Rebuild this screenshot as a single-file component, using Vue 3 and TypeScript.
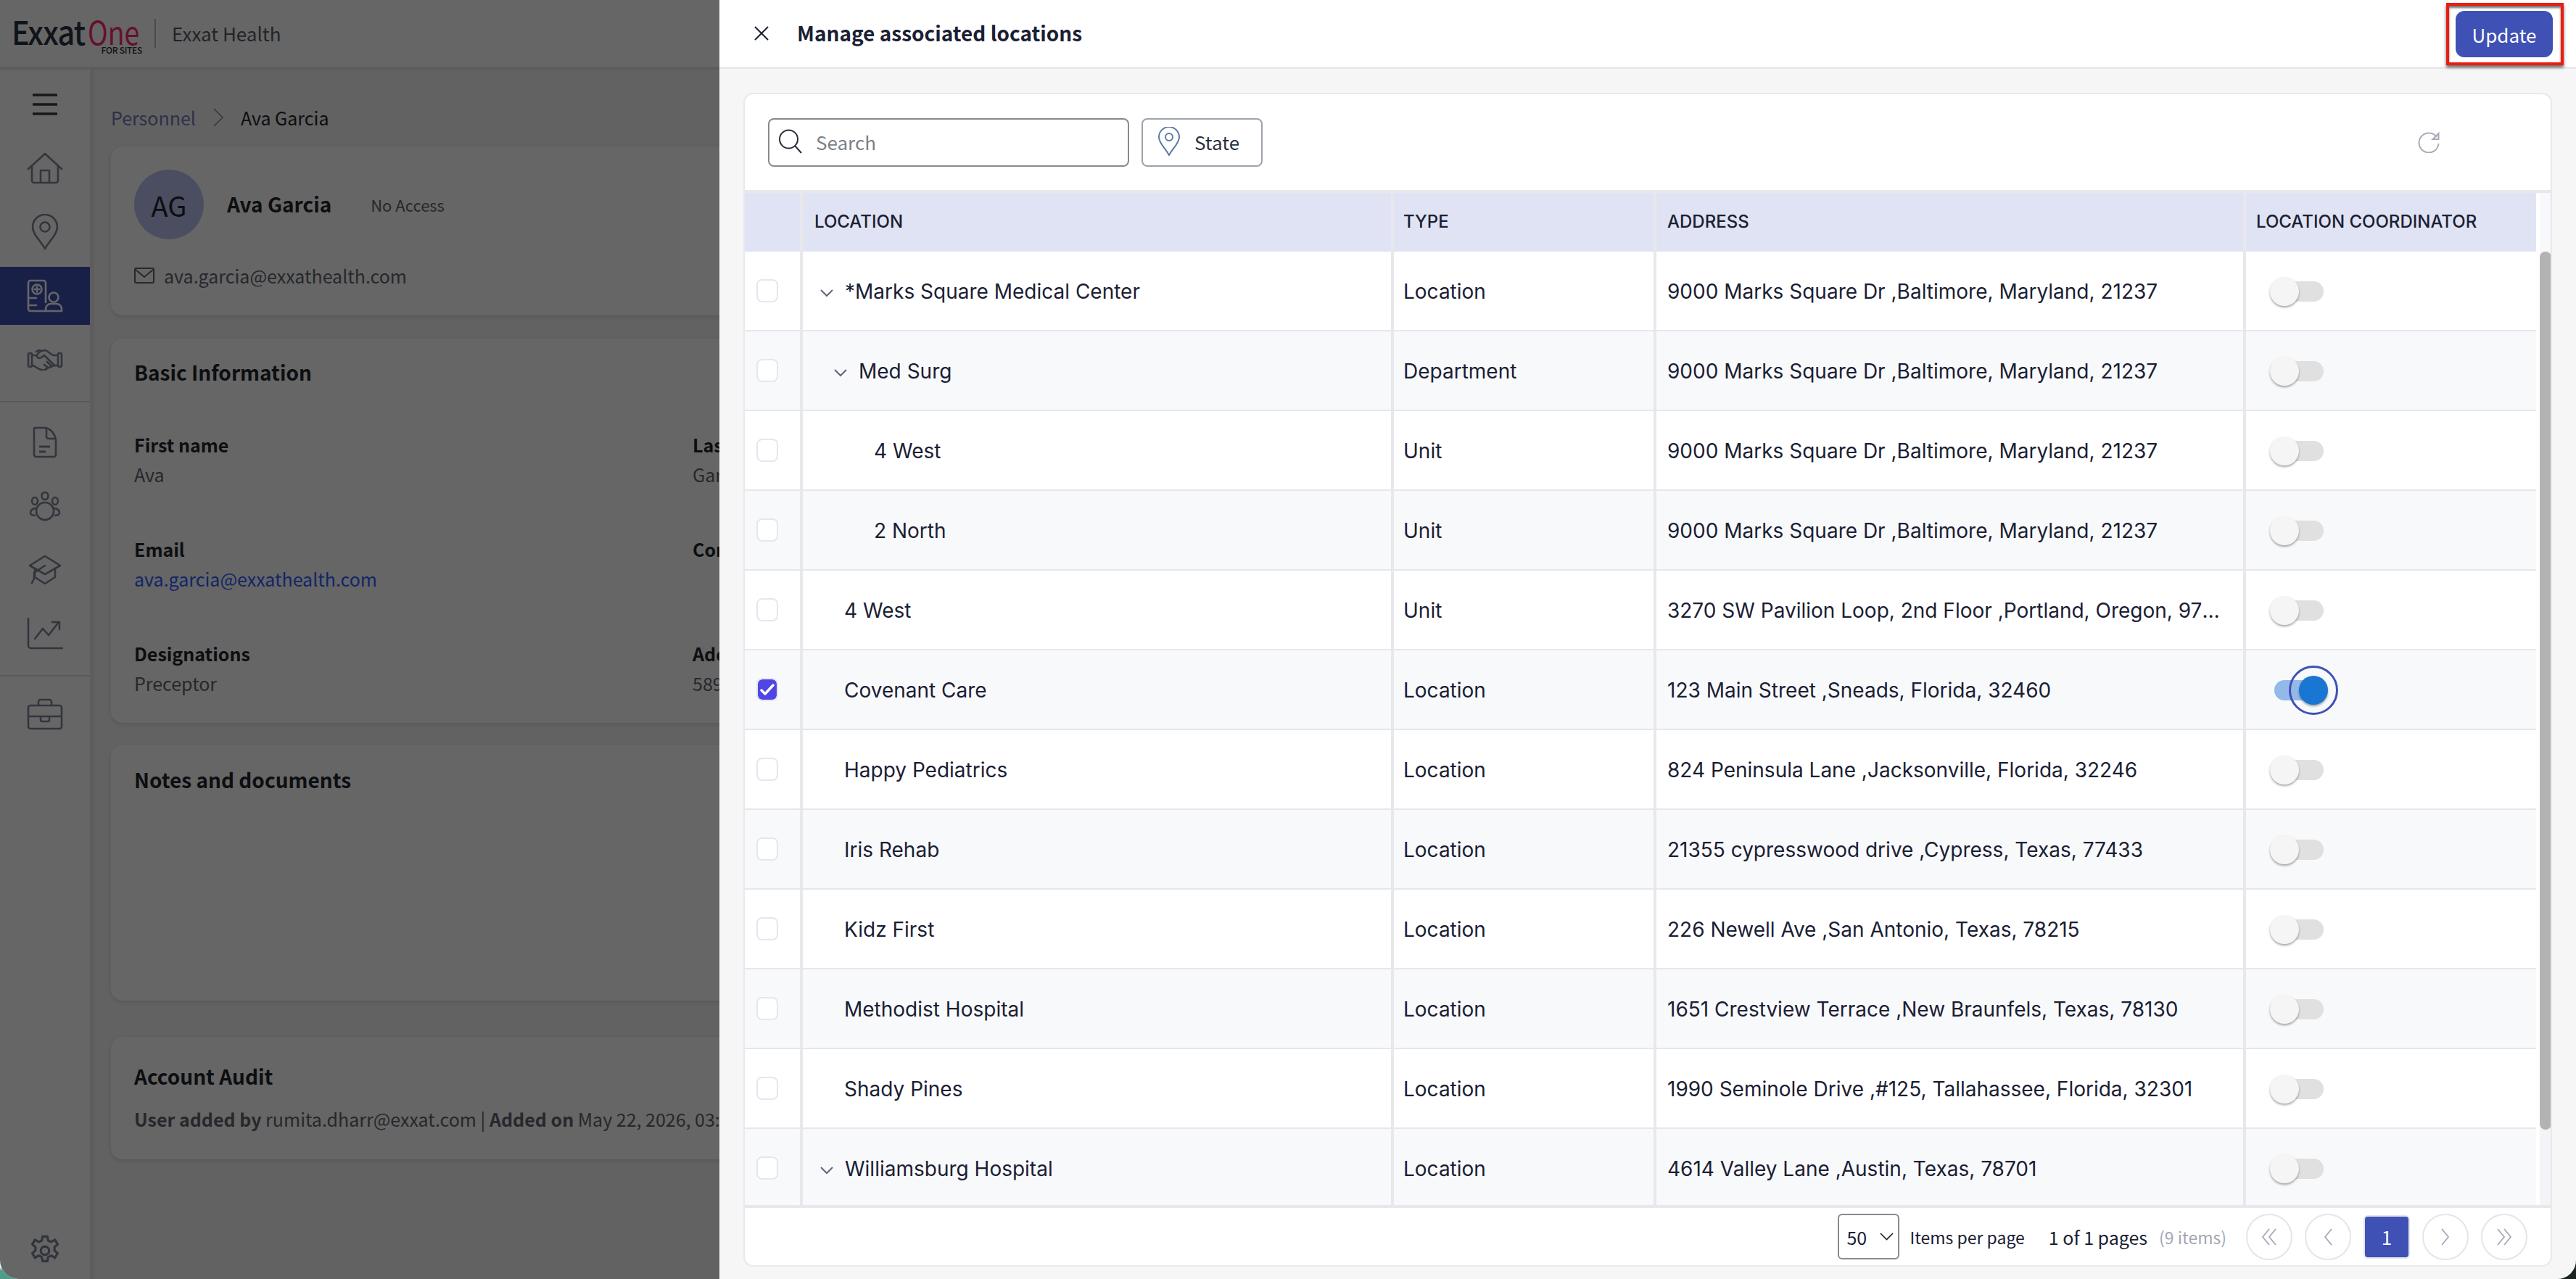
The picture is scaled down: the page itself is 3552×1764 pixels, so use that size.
<template>
  <div class="screen">
    <div class="window">
      <div class="app">
        <header class="topbar">
          <div class="logo">
            <span class="logo-exxat">Exxat</span>
            <span class="logo-one">One</span>
            <span class="logo-sub">FOR SITES</span>
          </div>
          <span class="logo-sep"></span>
          <span class="org">Exxat Health</span>
        </header>
        <div class="app-body">
          <nav class="sidebar">
            <a class="nav-item burger">
              <svg width="36" height="30" viewBox="0 0 36 30" fill="none" stroke="currentColor" stroke-width="3.500"><path d="M1 2h34M1 15h34M1 28h34" /></svg>
            </a>
            <a class="nav-item">
              <svg width="50" height="44" viewBox="0 0 50 44" fill="none" stroke="currentColor" stroke-width="2.600" stroke-linejoin="round" stroke-linecap="round"><path d="M2 23 25 2l23 21" /><path d="M7 19v20a3 3 0 0 0 3 3h30a3 3 0 0 0 3-3V19" /><path d="M19 42V25h12v17" /></svg>
            </a>
            <a class="nav-item">
              <svg width="38" height="50" viewBox="0 0 38 50" fill="none" stroke="currentColor" stroke-width="2.600" stroke-linejoin="round"><path d="M19 48C12 36 2 28 2 18a17 17 0 0 1 34 0c0 10-10 18-17 30Z" /><circle cx="19" cy="18" r="6.500" /></svg>
            </a>
            <a class="nav-item active">
              <svg width="50" height="46" viewBox="0 0 50 46" fill="none" stroke="currentColor" stroke-width="2.600" stroke-linecap="round" stroke-linejoin="round"><path d="M26 44H5a3 3 0 0 1-3-3V5a3 3 0 0 1 3-3h18a3 3 0 0 1 3 3v27" /><circle cx="14" cy="14" r="6.500" /><path d="M14 10.500v7M10.500 14h7" /><path d="M2 26h11M2 36h11" /><circle cx="37" cy="25" r="6.500" /><path d="M26 44v-3a7 7 0 0 1 7-7h8a7 7 0 0 1 7 7v3Z" /></svg>
            </a>
            <a class="nav-item">
              <svg width="50" height="30" viewBox="0 0 50 30" fill="none" stroke="currentColor" stroke-width="2.600" stroke-linecap="round" stroke-linejoin="round"><rect x="2" y="6" width="5" height="19" rx="2" /><rect x="43" y="6" width="5" height="19" rx="2" /><path d="M7 9h5M43 9h-7L26 2c-6 0-10 3-12 7-1 3 3 5 6 3l4-3 14 14" /><path d="M7 22l10 6 3 1c3 1 6 0 8-2l10-4h5" /><path d="M18 2c-2 0-3 1-5 2" /><path d="M24 22l5 4M28 18l5 5" /></svg>
            </a>
            <span class="nav-line"></span>
            <a class="nav-item">
              <svg width="34" height="44" viewBox="0 0 34 44" fill="none" stroke="currentColor" stroke-width="2.600" stroke-linejoin="round"><path d="M3 2h15c8 2 13 9 14 17v20a3 3 0 0 1-3 3H5a3 3 0 0 1-3-3V3Z" /><path d="M19 2v12a3 3 0 0 0 3 3h10" /><path d="M9 28h15M9 35h9" stroke-width="3" /></svg>
            </a>
            <a class="nav-item">
              <svg width="44" height="42" viewBox="0 0 44 42" fill="none" stroke="currentColor" stroke-width="2.600"><ellipse cx="22" cy="7" rx="4.500" ry="5" /><ellipse cx="8" cy="14" rx="4" ry="5" /><ellipse cx="36" cy="14" rx="4" ry="5" /><circle cx="22" cy="28" r="12" /><path d="M10 24c-5 0-8 3-8 6 0 2 2 4 7 4M34 24c5 0 8 3 8 6 0 2-2 4-7 4" /></svg>
            </a>
            <a class="nav-item">
              <svg width="46" height="40" viewBox="0 0 46 40" fill="none" stroke="currentColor" stroke-width="2.600" stroke-linejoin="round" stroke-linecap="round"><path d="M23 1 44 14 23 26 2 14Z" /><path d="M9 18v12l14 9 14-9V18" /><path d="M23 14 8 24v8l-3 6" /></svg>
            </a>
            <a class="nav-item">
              <svg width="50" height="44" viewBox="0 0 50 44" fill="none" stroke="currentColor" stroke-width="2.600" stroke-linecap="round" stroke-linejoin="round"><path d="M2 1v37a4 4 0 0 0 4 4h43" /><path d="M11 29l11-14 8 9 14-18" /><path d="M35 6h10v10" /></svg>
            </a>
            <span class="nav-line line-2"></span>
            <a class="nav-item">
              <svg width="50" height="44" viewBox="0 0 50 44" fill="none" stroke="currentColor" stroke-width="2.600" stroke-linejoin="round"><rect x="2" y="10" width="46" height="32" rx="3" /><path d="M16 10V5a3 3 0 0 1 3-3h12a3 3 0 0 1 3 3v5" /><path d="M2 25h46" /><path d="M19 25v5a2 2 0 0 0 2 2h8a2 2 0 0 0 2-2v-5" /></svg>
            </a>
            <a class="nav-item gear">
              <svg width="46" height="46" viewBox="0 0 24 24" fill="none" stroke="currentColor" stroke-width="1.700" stroke-linejoin="round"><circle cx="12" cy="12" r="3" /><path d="M10.300 1.700h3.400l.6 3 2.200 1 2.700-1.600 1.900 3.300-2.300 2c.1.800.1 1.600 0 2.400l2.300 2-1.900 3.300-2.700-1.600-2.200 1-.6 3h-3.400l-.6-3-2.200-1-2.700 1.600-1.900-3.300 2.300-2c-.1-.8-.1-1.600 0-2.400l-2.300-2 1.900-3.300 2.700 1.600 2.200-1z" /></svg>
            </a>
          </nav>

          <main class="content">
            <div class="crumbs">
              <span class="crumb-link">Personnel</span>
              <svg width="16" height="26" viewBox="0 0 16 26" fill="none" stroke="currentColor" stroke-width="1.500"><path d="M2 1l12 12L2 25" /></svg>
              <span>Ava Garcia</span>
            </div>

            <section class="card profile">
              <div class="profile-top">
                <span class="avatar">AG</span>
                <span class="profile-name">Ava Garcia</span>
                <span class="profile-access">No Access</span>
              </div>
              <div class="profile-mail">
                <svg width="28" height="22" viewBox="0 0 28 22" fill="none" stroke="currentColor" stroke-width="2"><rect x="1" y="1" width="26" height="20" rx="2" /><path d="M2 3l12 10L26 3" /></svg>
                ava.garcia@exxathealth.com
              </div>
            </section>

            <section class="card basic">
              <h2>Basic Information</h2>
              <div class="fields">
                <div v-for="f in fields" :key="f.label" class="field">
                  <b>{{ f.label }}</b>
                  <span :class="{ link: f.link }">{{ f.value }}</span>
                </div>
              </div>
            </section>

            <section class="card notes">
              <h2>Notes and documents</h2>
            </section>

            <section class="card audit">
              <h2>Account Audit</h2>
              <p><b>User added by</b> rumita.dharr@exxat.com | <b>Added on</b> May 22, 2026, 03:25 PM</p>
            </section>
          </main>
        </div>
      </div>

      <div class="scrim"></div>

      <aside class="panel">
        <header class="panel-head">
          <svg class="close" width="22" height="22" viewBox="0 0 22 22" fill="none" stroke="#1a2033" stroke-width="2"><path d="M2 2l18 18M20 2 2 20" /></svg>
          <h1>Manage associated locations</h1>
          <button class="update">Update</button>
          <span class="callout"></span>
        </header>

        <div class="panel-body">
          <section class="table-card">
            <div class="toolbar">
              <label class="search">
                <svg width="34" height="34" viewBox="0 0 34 34" fill="none" stroke="#2a2d36" stroke-width="2"><ellipse cx="14.500" cy="14" rx="12.500" ry="12.500" /><path d="M23 23l9 10" /></svg>
                <span>Search</span>
              </label>
              <button class="state">
                <svg width="30" height="40" viewBox="0 0 30 40" fill="none" stroke="#5a7aa8" stroke-width="2" stroke-linejoin="round"><path d="M15 39C10 29 1 23 1 14a14 14 0 0 1 28 0c0 9-9 15-14 25Z" /><circle cx="15" cy="14" r="5" /></svg>
                State
              </button>
              <svg class="refresh" width="30" height="30" viewBox="0 0 30 30" fill="none" stroke="#a8acb6" stroke-width="2"><path d="M26 8A13.500 13.500 0 1 0 28.500 17" /><path d="M28.500 3v8h-8z" /></svg>
            </div>

            <div class="thead">
              <div class="cols head-cols">
                <div class="cell c-check"></div>
                <div class="cell c-loc">LOCATION</div>
                <div class="cell c-type">TYPE</div>
                <div class="cell c-addr">ADDRESS</div>
                <div class="cell c-coord">LOCATION COORDINATOR</div>
              </div>
              <div class="scroll-head"></div>
            </div>

            <div class="tbody">
              <div class="rows">
                <div v-for="(r, i) in rows" :key="i" class="cols row" :class="{ alt: i % 2 === 1 }">
                  <div class="cell c-check">
                    <span class="check" :class="{ on: r.on }">
                      <svg v-if="r.on" width="20" height="16" viewBox="0 0 20 16" fill="none" stroke="#fff" stroke-width="3.500" stroke-linecap="round" stroke-linejoin="round"><path d="M2 9l5 5L18 2" /></svg>
                    </span>
                  </div>
                  <div class="cell c-loc" :style="{ paddingLeft: r.indent + 'px' }">
                    <svg v-if="r.open" class="chev" width="18" height="11" viewBox="0 0 18 11" fill="none" stroke="#5f6675" stroke-width="2"><path d="M1 1l8 8 8-8" /></svg>
                    {{ r.name }}
                  </div>
                  <div class="cell c-type">{{ r.type }}</div>
                  <div class="cell c-addr"><span class="addr">{{ r.address }}</span></div>
                  <div class="cell c-coord">
                    <span class="toggle" :class="{ on: r.on }"><i></i></span>
                  </div>
                </div>
              </div>
              <div class="scrollbar"><i></i></div>
            </div>

            <footer class="pager">
              <div class="per-page">
                50
                <svg width="19" height="11" viewBox="0 0 19 11" fill="none" stroke="#1a2033" stroke-width="1.600"><path d="M1 1l8.500 8.500L18 1" /></svg>
              </div>
              <span class="per-label">Items per page</span>
              <span class="pages">1 of 1 pages</span>
              <span class="items">(9 items)</span>
              <div class="pg-buttons">
                <button class="pg">
                  <svg width="22" height="24" viewBox="0 0 22 24" fill="none" stroke="#a6a9b5" stroke-width="1.800"><path d="M11 1 2 12l9 11M20 1l-9 11 9 11" /></svg>
                </button>
                <button class="pg">
                  <svg width="12" height="24" viewBox="0 0 12 24" fill="none" stroke="#a6a9b5" stroke-width="1.800"><path d="M11 1 2 12l9 11" /></svg>
                </button>
                <button class="pg current">1</button>
                <button class="pg">
                  <svg width="12" height="24" viewBox="0 0 12 24" fill="none" stroke="#a6a9b5" stroke-width="1.800"><path d="M1 1l9 11-9 11" /></svg>
                </button>
                <button class="pg">
                  <svg width="22" height="24" viewBox="0 0 22 24" fill="none" stroke="#a6a9b5" stroke-width="1.800"><path d="M2 1l9 11-9 11M11 1l9 11-9 11" /></svg>
                </button>
              </div>
            </footer>
          </section>
        </div>
      </aside>
    </div>
  </div>
</template>

<script setup lang="ts">
interface LocationRow {
  name: string
  type: string
  address: string
  indent: number
  open?: boolean
  on?: boolean
}

const marks = '9000 Marks Square Dr ,Baltimore, Maryland, 21237'

const fields = [
  { label: 'First name', value: 'Ava' },
  { label: 'Last name', value: 'Garcia' },
  { label: 'Email', value: 'ava.garcia@exxathealth.com', link: true },
  { label: 'Contact', value: '' },
  { label: 'Designations', value: 'Preceptor' },
  { label: 'Address', value: '5890 Main Street' },
]

const rows: LocationRow[] = [
  { name: '*Marks Square Medical Center', type: 'Location', address: marks, indent: 24, open: true },
  { name: 'Med Surg', type: 'Department', address: marks, indent: 43, open: true },
  { name: '4 West', type: 'Unit', address: marks, indent: 98 },
  { name: '2 North', type: 'Unit', address: marks, indent: 98 },
  { name: '4 West', type: 'Unit', address: '3270 SW Pavilion Loop, 2nd Floor ,Portland, Oregon, 97239', indent: 57 },
  { name: 'Covenant Care', type: 'Location', address: '123 Main Street ,Sneads, Florida, 32460', indent: 57, on: true },
  { name: 'Happy Pediatrics', type: 'Location', address: '824 Peninsula Lane ,Jacksonville, Florida, 32246', indent: 57 },
  { name: 'Iris Rehab', type: 'Location', address: '21355 cypresswood drive ,Cypress, Texas, 77433', indent: 57 },
  { name: 'Kidz First', type: 'Location', address: '226 Newell Ave ,San Antonio, Texas, 78215', indent: 57 },
  { name: 'Methodist Hospital', type: 'Location', address: '1651 Crestview Terrace ,New Braunfels, Texas, 78130', indent: 57 },
  { name: 'Shady Pines', type: 'Location', address: '1990 Seminole Drive ,#125, Tallahassee, Florida, 32301', indent: 57 },
  { name: 'Williamsburg Hospital', type: 'Location', address: '4614 Valley Lane ,Austin, Texas, 78701', indent: 24, open: true },
]
</script>

<style scoped>
.screen {
  position: relative;
  width: 3552px;
  height: 1764px;
  overflow: hidden;
  background:
    linear-gradient(180deg, transparent 1748px, #4f9c8a 1752px) 0 0 / 200px 100% no-repeat,
    linear-gradient(90deg, #f4f6f5 200px, #1d2421 3400px);
  font-family: "Noto Sans CJK SC", sans-serif;
}
.window {
  position: relative;
  height: 1764px;
  border-radius: 0 0 26px 26px;
  overflow: hidden;
}
.app {
  display: flex;
  flex-direction: column;
  height: 100%;
  background: #f5f5f5;
  color: #22252c;
}
.topbar {
  display: flex;
  align-items: center;
  flex: none;
  height: 92px;
  padding-left: 16px;
  background: #fff;
  border-bottom: 4px solid #e6e6e6;
}
.logo {
  position: relative;
  display: flex;
  align-items: flex-start;
  width: 180px;
  height: 92px;
  font-size: 45px;
}
.logo-exxat,
.logo-one {
  flex: none;
  height: 38px;
  margin-top: 24px;
  line-height: 38px;
  transform-origin: left center;
}
.logo-exxat {
  width: 105px;
  transform: scaleX(0.92);
  font-weight: 500;
  letter-spacing: -1px;
  color: #2a3442;
}
.logo-one {
  transform: scaleX(0.83);
  color: #ff2a6e;
}
.logo-sub {
  position: absolute;
  right: 0;
  top: 62px;
  line-height: 14px;
  font-size: 12px;
  letter-spacing: -0.3px;
  font-weight: 500;
  color: #333;
}
.logo-sep {
  width: 2px;
  height: 40px;
  margin: 0 22px 0 17px;
  background: #bbb;
}
.org {
  margin-bottom: 2px;
  font-size: 26px;
  color: #555a66;
}
.app-body {
  display: flex;
  flex: 1;
  min-height: 0;
}
.sidebar {
  display: flex;
  flex-direction: column;
  flex: none;
  width: 124px;
  padding-top: 8px;
  background: #fff;
  border-right: 6px solid #e8e8e8;
  color: #80869a;
}
.nav-item {
  display: flex;
  align-items: center;
  justify-content: center;
  flex: none;
  height: 80px;
  margin-bottom: 8px;
}
.nav-item.burger {
  color: #3a3d48;
}
.nav-item.active {
  background: #3f51b5;
  color: #fff;
}
.nav-line {
  height: 2px;
  margin: 9px 0 15px;
  background: #dedede;
}
.line-2 {
  margin: 9px 0 12px;
}
.gear {
  height: 46px;
  margin: auto 0 16px;
}
.content {
  flex: 1;
  min-width: 0;
  padding: 0 0 0 23px;
}
.crumbs {
  display: flex;
  align-items: center;
  gap: 23px;
  height: 36px;
  margin: 48px 0 22px 0;
  font-size: 25px;
  color: #22252c;
}
.crumb-link {
  color: #6f7cb8;
}
.crumbs svg {
  color: #888;
}
.card {
  width: 1500px;
  margin-bottom: 32px;
  padding: 0 32px;
  box-sizing: border-box;
  background: #fff;
  border-radius: 16px;
  box-shadow: 0 2px 6px rgba(0, 0, 0, 0.12);
}
.profile {
  height: 233px;
  padding-top: 32px;
}
.profile-top {
  display: flex;
  align-items: center;
  height: 96px;
}
.avatar {
  display: flex;
  align-items: center;
  justify-content: center;
  width: 96px;
  height: 96px;
  border-radius: 50%;
  background: #bcc3f0;
  font-size: 38px;
  color: #22252c;
}
.profile-name {
  margin: 0 0 3px 32px;
  font-size: 28px;
  font-weight: 600;
}
.profile-access {
  margin-left: 54px;
  font-size: 22px;
  color: #60646f;
}
.profile-mail {
  display: flex;
  align-items: center;
  gap: 13px;
  margin-top: 32px;
  font-size: 25px;
  color: #60646f;
}
.card h2 {
  margin: 0;
  font-size: 28px;
  font-weight: 600;
  color: #22252c;
}
.basic {
  height: 530px;
  padding-top: 26px;
}
.fields {
  display: grid;
  grid-template-columns: 770px 1fr;
  row-gap: 54px;
  margin-top: 62px;
}
.field {
  display: flex;
  flex-direction: column;
  gap: 5px;
  height: 90px;
  font-size: 25px;
  color: #60646f;
}
.field b {
  font-weight: 600;
  color: #22252c;
}
.link {
  color: #2f5dff;
}
.notes {
  height: 353px;
  padding-top: 28px;
  margin-top: -2px;
  margin-bottom: 50px;
}
.audit {
  height: 169px;
  padding-top: 34px;
}
.audit p {
  margin: 21px 0 0;
  font-size: 25px;
  color: #60646f;
  white-space: nowrap;
}
.audit b {
  font-weight: 600;
}
.scrim {
  position: absolute;
  inset: 0;
  background: rgba(0, 0, 0, 0.6);
}
.panel {
  position: absolute;
  top: 0;
  left: 992px;
  right: 0;
  bottom: 0;
  display: flex;
  flex-direction: column;
  background: #f6f6f6;
  color: #1a2033;
}
.panel-head {
  position: relative;
  display: flex;
  align-items: center;
  flex: none;
  height: 95px;
  padding-left: 47px;
  box-sizing: border-box;
  background: #fff;
  border-bottom: 3px solid #e8e8ee;
}
.close {
  flex: none;
}
.panel-head h1 {
  margin: 0 0 3px 38px;
  font-size: 28px;
  font-weight: 600;
  color: #1a2033;
}
.update {
  width: 134px;
  height: 64px;
  margin: 2px 32px 0 auto;
  padding: 0;
  border: 0;
  border-radius: 12px;
  background: #3f51b5;
  color: #fff;
  font: 400 26px "Noto Sans CJK SC", sans-serif;
}
.callout {
  position: absolute;
  left: 2381px;
  top: 4px;
  width: 162px;
  height: 86px;
  box-sizing: border-box;
  border: 4px solid #ec1c0e;
  box-shadow: 0 3px 4px rgba(0, 0, 0, 0.6), inset 0 3px 3px rgba(0, 0, 0, 0.55);
}
.panel-body {
  flex: 1;
  min-height: 0;
  padding: 33px 33px 17px 33px;
  box-sizing: border-box;
}
.table-card {
  display: flex;
  flex-direction: column;
  height: 100%;
  box-sizing: border-box;
  background: #fff;
  border: 2px solid #e8e8ee;
  border-radius: 14px;
  overflow: hidden;
}
.toolbar {
  display: flex;
  align-items: center;
  flex: none;
  height: 132px;
  padding: 0 153px 0 32px;
  box-sizing: border-box;
}
.search,
.state {
  display: flex;
  align-items: center;
  height: 67px;
  padding-bottom: 2px;
  box-sizing: border-box;
  background: #fff;
  border-radius: 8px;
  font: 400 26px "Noto Sans CJK SC", sans-serif;
}
.search {
  width: 498px;
  padding-left: 12px;
  gap: 18px;
  border: 2px solid #8a8a8a;
  color: #7c7f87;
}
.state {
  width: 167px;
  margin-left: 17px;
  padding-left: 21px;
  padding-right: 0;
  padding-top: 0;
  gap: 20px;
  border: 2px solid #9ea2ac;
  color: #2a2f3e;
}
.refresh {
  margin-left: auto;
}
.thead {
  display: flex;
  flex: none;
  height: 85px;
  border-top: 4px solid #e8e8ec;
  box-sizing: border-box;
}
.cols {
  display: grid;
  grid-template-columns: 80px 815px 362px 813px 400px;
  width: 2470px;
}
.cell {
  display: flex;
  align-items: center;
  min-width: 0;
  box-sizing: border-box;
  border-right: 4px solid #e8e8ec;
  font: 400 28px Inter, sans-serif;
  color: #1a2033;
}
.cell:last-child {
  border-right: 0;
}
.head-cols {
  background: #e0e3f3;
}
.head-cols .cell {
  padding-bottom: 3px;
  font-size: 24px;
  font-weight: 500;
}
.c-loc {
  padding-left: 16px;
}
.c-type {
  padding-left: 13px;
}
.c-addr {
  padding-left: 15px;
  padding-right: 26px;
}
.c-coord {
  padding-left: 14px;
}
.scroll-head {
  width: 21px;
  background: #f8f9fb;
  border-left: 5px solid #fff;
  box-sizing: border-box;
}
.tbody {
  display: flex;
  flex: none;
  height: 1315px;
  overflow: hidden;
}
.rows {
  flex: none;
  width: 2470px;
}
.row {
  height: 110px;
  box-sizing: border-box;
  border-bottom: 2px solid #e6e7ec;
  background: #fff;
}
.row.alt {
  background: #f8f9fb;
}
.row .c-loc,
.row .c-type,
.row .c-addr,
.row .c-coord {
  padding-top: 2px;
}
.row .c-coord {
  padding-left: 39px;
}
.c-check {
  padding-left: 16px;
}
.check {
  display: flex;
  align-items: center;
  justify-content: center;
  width: 30px;
  height: 32px;
  box-sizing: border-box;
  border: 2px solid #e5e7f0;
  border-radius: 8px;
  background: #fff;
}
.check.on {
  background: #4f46e5;
  background-clip: padding-box;
}
.chev {
  flex: none;
  margin: 4px 16px 0 0;
}
.addr {
  overflow: hidden;
  white-space: nowrap;
  text-overflow: ellipsis;
}
.toggle {
  position: relative;
  display: block;
  width: 68px;
  height: 28px;
  border-radius: 14px;
  background: #e0e0e0;
}
.toggle i {
  position: absolute;
  top: -6px;
  left: -6px;
  width: 40px;
  height: 40px;
  border-radius: 50%;
  background: #f5f5f5;
  box-shadow: 0 2px 3px rgba(0, 0, 0, 0.35);
}
.toggle.on {
  background: #92b9ea;
}
.toggle.on i {
  left: 34px;
  background: #1976d2;
}
.toggle.on i::after {
  content: "";
  position: absolute;
  inset: -14px;
  border: 3px solid #3f51b5;
  border-radius: 50%;
}
.scrollbar {
  flex: none;
  width: 16px;
  margin-left: 5px;
  background: #f4f4f6;
}
.scrollbar i {
  display: block;
  height: 1211px;
  border-radius: 8px;
  background: #b3b3b3;
}
.pager {
  display: flex;
  align-items: center;
  justify-content: flex-end;
  flex: 1;
  padding-right: 32px;
  border-top: 4px solid #e8e8ec;
  font-size: 23px;
  color: #1a2033;
}
.per-page {
  display: flex;
  align-items: center;
  justify-content: space-between;
  width: 85px;
  height: 63px;
  padding: 0 6px 0 10px;
  box-sizing: border-box;
  border: 2px solid #8a8a8a;
  border-radius: 6px;
  font-size: 25px;
}
.per-label {
  margin-left: 14px;
}
.pages {
  margin-left: 33px;
  font-size: 25px;
}
.items {
  margin-left: 16px;
  color: #a3a6b3;
}
.pg-buttons {
  display: flex;
  align-items: center;
  gap: 17px;
  margin-left: 27px;
}
.pg {
  display: flex;
  align-items: center;
  justify-content: center;
  width: 64px;
  height: 64px;
  padding: 0;
  box-sizing: border-box;
  background: #fff;
  border: 2px solid #e4e5ec;
  border-radius: 50%;
}
.pg.current {
  height: 60px;
  border-radius: 6px;
  background: #3f51b5;
  color: #fff;
  font: 400 26px "Noto Sans CJK SC", sans-serif;
}
</style>

<style>
html,
body {
  margin: 0;
  background: #fff;
}
</style>
